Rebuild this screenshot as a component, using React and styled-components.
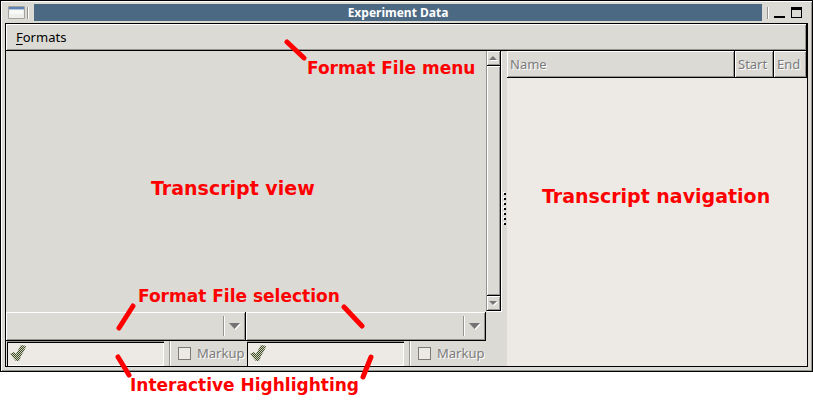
import React from "react";
import styled, { createGlobalStyle, css } from "styled-components";

const face = "#dbdad5";
const field = "#edeae6";
const shade = "#96948f";
const ink = "#000";
const muted = "#7b7b7b";

const GlobalStyle = createGlobalStyle`
  * { box-sizing: border-box; }
  body {
    margin: 0;
    background: #fff;
    font-family: "Noto Sans", sans-serif;
    font-size: 13px;
    line-height: 18px;
    color: ${ink};
  }
  button, input, select { font: inherit; margin: 0; padding: 0; border: 0; border-radius: 0; }
`;

const raised = css`
  background: ${face};
  box-shadow: inset 1px 1px 0 #fff, inset -1px -1px 0 ${shade};
`;

const etched = css`
  color: ${muted};
  text-shadow: 1px 1px 0 #fff;
`;

const Stage = styled.div`
  position: relative;
  padding-bottom: 28px;
`;

const Window = styled.section`
  border: 1px solid ${ink};
  background: ${face};
  box-shadow: inset 1px 1px 0 #fff, inset -1px -1px 0 ${shade};
  padding: 3px 4px 4px;
`;

const TitleBar = styled.header`
  display: flex;
  height: 19px;
  padding-right: 5px;
`;

const WindowMenu = styled.button`
  width: 22px;
  padding: 2px 0 3px 3px;
  background: transparent;
  svg { display: block; }
`;

const TitleText = styled.h1`
  flex: 1;
  height: 17px;
  margin: 0 5px;
  background: #4b6983;
  color: #fff;
  font-size: 12px;
  font-weight: 700;
  line-height: 17px;
  text-align: center;
`;

const Groove = styled.span`
  flex: none;
  align-self: ${(p) => (p.$full ? "stretch" : "flex-start")};
  width: 2px;
  height: ${(p) => (p.$full ? "auto" : "12px")};
  margin-top: ${(p) => (p.$full ? 0 : "3px")};
  border-left: 1px solid ${shade};
  border-right: 1px solid #fff;
`;

const WindowButton = styled.button`
  width: 17px;
  height: 17px;
  background: transparent;
  svg { display: block; }
`;

const Client = styled.main`
  border: 1px solid ${ink};
`;

const MenuBar = styled.nav`
  ${raised}
  display: flex;
  align-items: center;
  height: 27px;
  padding: 0 10px;
  border-right: 1px solid ${ink};
  border-bottom: 1px solid ${ink};
`;

const MenuItem = styled.button`
  background: transparent;
  color: ${ink};
  u { text-underline-offset: 2px; }
`;

const Panes = styled.div`
  display: grid;
  grid-template-columns: minmax(0, 124fr) 5px minmax(0, 75fr);
`;

const LeftPane = styled.div`
  display: flex;
  flex-direction: column;
`;

const TranscriptRow = styled.div`
  display: flex;
  padding: 0 1px 1px 0;
`;

const Transcript = styled.div`
  flex: 1;
  min-height: 260px;
`;

const ScrollBar = styled.div`
  display: flex;
  flex-direction: column;
  width: 15px;
  border-left: 1px solid ${shade};
  border-right: 1px solid ${ink};
  border-bottom: 1px solid ${ink};
  box-shadow: 1px 1px 0 #fff;
`;

const ScrollButton = styled.button`
  ${raised}
  display: grid;
  place-items: center;
  height: 14px;
`;

const ScrollThumb = styled.div`
  ${raised}
  flex: 1;
  border-top: 1px solid ${ink};
  border-bottom: 1px solid ${ink};
`;

const Controls = styled.div`
  display: grid;
  grid-template-columns: repeat(2, minmax(0, 1fr));
  margin-right: 16px;
`;

const Combo = styled.div`
  ${raised}
  display: grid;
  height: 29px;
  border-right: 1px solid ${ink};
  border-bottom: 1px solid ${ink};
`;

const Select = styled.select`
  grid-area: 1 / 1;
  appearance: none;
  background: transparent;
`;

const ComboArrow = styled.span`
  grid-area: 1 / 1;
  justify-self: end;
  display: flex;
  align-items: center;
  gap: 4px;
  padding: 4px 4px 4px 0;
  pointer-events: none;
`;

const Highlight = styled.div`
  display: flex;
  height: 25px;
  padding-left: 1px;
`;

const Entry = styled.div`
  display: flex;
  flex: 1;
  min-width: 0;
  align-items: center;
  background: ${field};
  border-top: 1px solid ${shade};
  box-shadow: inset 1px 1px 0 ${ink}, inset -1px -1px 0 #fff;
  padding: 0 1px 2px 3px;
`;

const EntryInput = styled.input`
  flex: 1;
  min-width: 0;
  background: transparent;
`;

const Markup = styled.label`
  ${etched}
  display: flex;
  align-items: center;
  width: 82px;
  gap: 6px;
  padding-left: 5px;
`;

const MarkupText = styled.span`
  padding-bottom: 2px;
`;

const Check = styled.input`
  appearance: none;
  flex: none;
  width: 13px;
  height: 13px;
  border: 1px solid ${muted};
  background: ${field};
  ${Markup} & { margin-left: 1px; }
`;

const Handle = styled.div`
  display: grid;
  place-items: center end;
`;

const RightPane = styled.div`
  background: ${field};
`;

const Table = styled.table`
  width: 100%;
  table-layout: fixed;
  border-collapse: separate;
  border-spacing: 0;
`;

const Heading = styled.th`
  ${raised}
  ${etched}
  width: ${(p) => p.$width || "auto"};
  height: 27px;
  padding: 0 3px;
  border-right: 1px solid ${ink};
  border-bottom: 1px solid ${ink};
  font-weight: 400;
  text-align: left;
`;

const Note = styled.p`
  position: absolute;
  left: ${(p) => p.$x}px;
  top: ${(p) => p.$y}px;
  margin: 0;
  color: #f00;
  font: 700 ${(p) => (p.$large ? 19 : 17)}px/20px "DejaVu Sans", sans-serif;
  white-space: nowrap;
`;

const Pointers = styled.svg`
  position: absolute;
  left: 0;
  top: 0;
  pointer-events: none;
  stroke: #f00;
  stroke-width: 5;
  stroke-linecap: round;
`;

const Arrow = ({ up, small }) => {
  const w = small ? 9 : 12;
  const h = small ? 5 : 7;
  const down = `M0 0H${w - 1}L${(w - 1) / 2} ${h - 1}Z`;
  const rise = `M0 ${h - 1}H${w - 1}L${(w - 1) / 2} 0Z`;
  return (
    <svg width={w} height={h} aria-hidden="true">
      <path d={up ? rise : down} fill="#fff" transform="translate(1 1)" />
      <path d={up ? rise : down} fill="#757575" />
    </svg>
  );
};

const tickPath = "M0 9L4 7L6 9L11 0L16 1L15 4L11 11L9 16H6Z";

const Tick = ({ id }) => (
  <svg width="16" height="17" viewBox="0 0 16 17" aria-hidden="true">
    <defs>
      <pattern id={id} width="2" height="2" patternUnits="userSpaceOnUse">
        <path d="M0 0H1V1H0ZM1 1H2V2H1Z" fill="#3c4a20" shapeRendering="crispEdges" />
      </pattern>
    </defs>
    <path d={tickPath} fill="#b4b8a4" fillOpacity="0.5" />
    <path d={tickPath} fill={`url(#${id})`} />
  </svg>
);

const FormatControls = ({ id }) => (
  <div>
    <Combo>
      <Select aria-label={`Format file ${id}`} disabled />
      <ComboArrow>
        <Groove $full />
        <Arrow />
      </ComboArrow>
    </Combo>
    <Highlight>
      <Entry>
        <Tick id={`tick-${id}`} />
        <EntryInput type="text" aria-label={`Highlight ${id}`} disabled />
      </Entry>
      <Markup>
        <Groove $full />
        <Check type="checkbox" disabled />
        <MarkupText>Markup</MarkupText>
      </Markup>
    </Highlight>
  </div>
);

const dots = [0, 5, 10, 15, 20, 25, 30];

export default function App() {
  return (
    <Stage>
      <GlobalStyle />
      <Window>
        <TitleBar>
          <WindowMenu aria-label="Window menu">
            <svg width="17" height="14">
              <rect width="17" height="13" rx="1" fill="#a3a39f" />
              <rect x="1" y="1" width="15" height="11" fill="#eeeeea" />
              <rect x="1" y="1" width="15" height="2" fill="#5d82b5" />
              <rect x="1" y="3" width="15" height="1" fill="#b9c8dc" />
              <rect x="2" y="4" width="13" height="4" fill="#f8f8f6" />
            </svg>
          </WindowMenu>
          <Groove />
          <TitleText>Experiment Data</TitleText>
          <Groove />
          <WindowButton aria-label="Minimize">
            <svg width="17" height="17"><rect x="5" y="12" width="11" height="2" /></svg>
          </WindowButton>
          <WindowButton aria-label="Maximize">
            <svg width="17" height="17"><path d="M5 3H16V14H5ZM6 6V13H15V6Z" fillRule="evenodd" /></svg>
          </WindowButton>
        </TitleBar>
        <Client>
          <MenuBar>
            <MenuItem><u>F</u>ormats</MenuItem>
          </MenuBar>
          <Panes>
            <LeftPane>
              <TranscriptRow>
                <Transcript />
                <ScrollBar>
                  <ScrollButton aria-label="Scroll up"><Arrow up small /></ScrollButton>
                  <ScrollThumb />
                  <ScrollButton aria-label="Scroll down"><Arrow small /></ScrollButton>
                </ScrollBar>
              </TranscriptRow>
              <Controls>
                <FormatControls id="a" />
                <FormatControls id="b" />
              </Controls>
            </LeftPane>
            <Handle>
              <svg width="4" height="33" shapeRendering="crispEdges">
                {dots.map((y) => (
                  <React.Fragment key={y}>
                    <rect x="0" y={y} width="2" height="2" fill="#fff" />
                    <rect x="1" y={y + 1} width="2" height="2" />
                  </React.Fragment>
                ))}
              </svg>
            </Handle>
            <RightPane>
              <Table>
                <thead>
                  <tr>
                    <Heading>Name</Heading>
                    <Heading $width="39px">Start</Heading>
                    <Heading $width="33px">End</Heading>
                  </tr>
                </thead>
              </Table>
            </RightPane>
          </Panes>
        </Client>
      </Window>
      <Note $x={307} $y={58}>Format File menu</Note>
      <Note $x={151} $y={178} $large>Transcript view</Note>
      <Note $x={542} $y={186} $large>Transcript navigation</Note>
      <Note $x={138} $y={286}>Format File selection</Note>
      <Note $x={130} $y={375}>Interactive Highlighting</Note>
      <Pointers width="500" height="400" aria-hidden="true">
        <path d="M287 42L304 58M133 306L119 328M344 307L362 326M118 357L129 375M371 357L363 377" />
      </Pointers>
    </Stage>
  );
}
